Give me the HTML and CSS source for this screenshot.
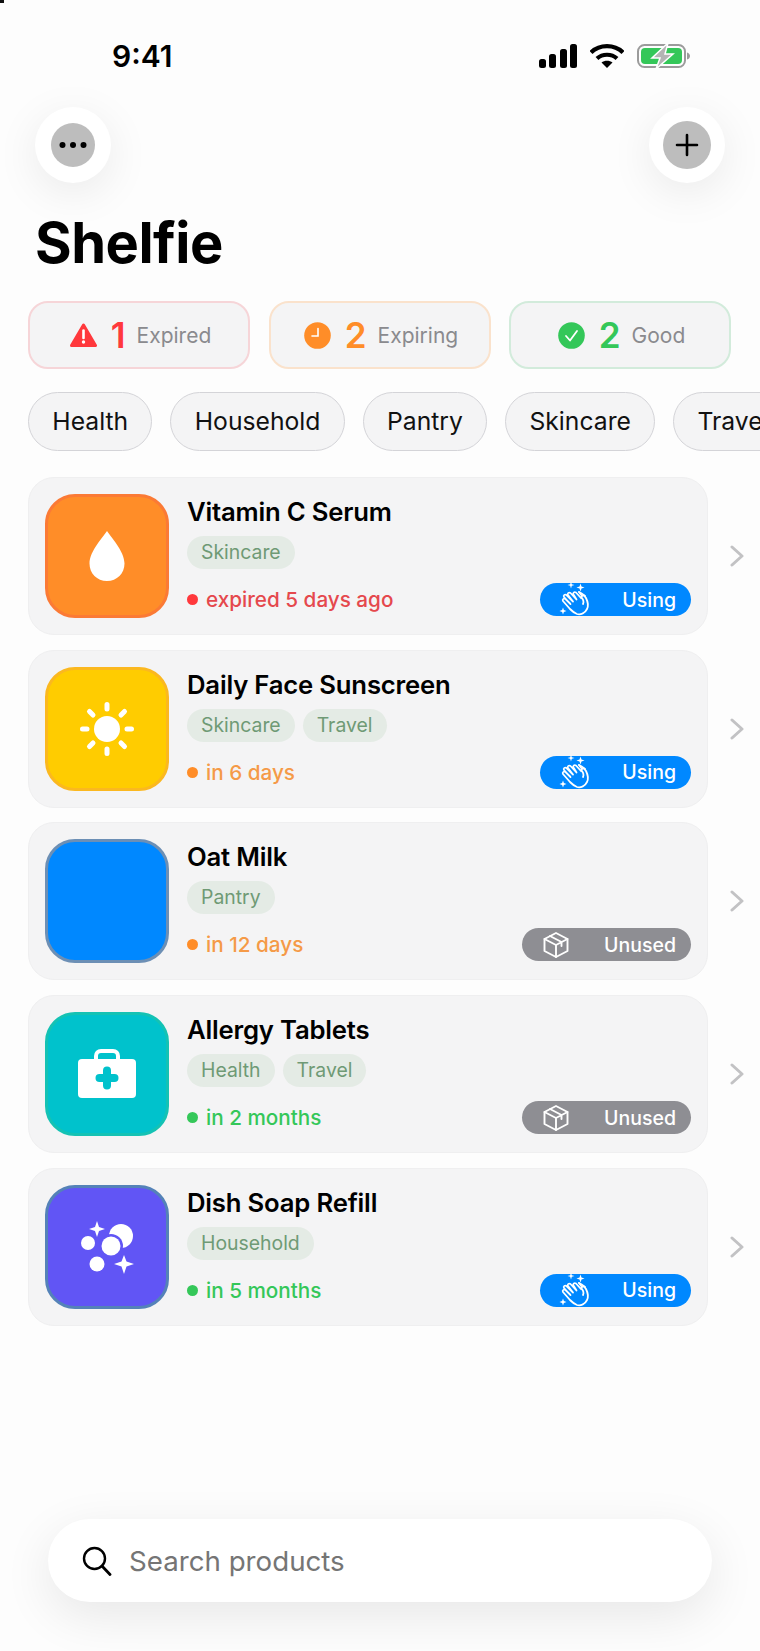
FILE: index.html
```html
<!DOCTYPE html>
<html lang="en">
<head>
  <meta charset="UTF-8" />
  <meta name="viewport" content="width=device-width, initial-scale=1.0"/>
  <title>Shelfie</title>
  <link rel="stylesheet" href="styles.css">
</head>
<body>
  <svg class="defs" width="0" height="0">
    <symbol id="clap" viewBox="0 0 36 36">
      <g fill="none" stroke="#fff" stroke-width="1.800" stroke-linecap="round" stroke-linejoin="round">
        <path d="M21 12c3 1 5 3 7 6 2 4 3 7 1 11-2 4-6 6-10 5-3-1-5-3-7-5l-7-8c-1-2 1-3 2.500-2l5 5-6.500-7c-1-2 1-3 2.500-2l6.500 6.500-5-6.500c-1-2 1-3 2.500-2l6 6.500-3-5c-1-2 1-3 2.500-2l5 5.500"/>
        <path d="M21 12l3 4c1-1 2-1 3 0M25 24c1-2 0-5-2-7"/>
      </g>
      <path d="M13 1.500l.8 2.700 2.700.8-2.700.8-.8 2.700-.8-2.700-2.700-.8 2.700-.8zM22.500 3.500l1 3 3 1-3 1-1 3-1-3-3-1 3-1zM5 27.500l.9 2.600 2.600.9-2.600.9L5 34.500l-.9-2.600L1.500 31l2.600-.9z" fill="#fff"/>
    </symbol>
    <symbol id="box" viewBox="0 0 28 28">
      <g fill="none" stroke="#fff" stroke-width="1.900" stroke-linejoin="round" stroke-linecap="round">
        <path d="M14 2l11.500 6v12L14 26 2.500 20V8z"/>
        <path d="M2.500 8L14 14l11.500-6M14 14v12M8 5l11.500 6v4"/>
      </g>
    </symbol>
  </svg>

  <div class="corner-mark"></div>

  <div class="status-bar">
    <span class="time">9:41</span>
    <div class="status-icons">
      <svg width="38" height="24" viewBox="0 0 38 24"><g fill="#000"><rect x="0" y="15" width="7" height="9" rx="2.500"/><rect x="10" y="10" width="7" height="14" rx="2.500"/><rect x="21" y="5" width="7" height="19" rx="2.500"/><rect x="31" y="0" width="7" height="24" rx="2.500"/></g></svg>
      <svg width="34" height="24" viewBox="0 0 34 24"><path d="M1 8.500C9.500 0 24.500 0 33 8.500" fill="none" stroke="#000" stroke-width="4.200"/><path d="M7 14.500c5.500-5 14.500-5 20 0" fill="none" stroke="#000" stroke-width="4.200"/><path d="M11.500 18.500c3-2.500 8-2.500 11 0L17 24z" fill="#000"/></svg>
      <svg width="54" height="26" viewBox="0 0 54 26">
        <rect x="1" y="2" width="47" height="22" rx="6.500" fill="none" stroke="#9b9b9b" stroke-width="2"/>
        <rect x="4" y="5" width="41" height="16" rx="4" fill="#34c759"/>
        <path d="M50 9.500c2 .5 3 2 3 3.500s-1 3-3 3.500z" fill="#9b9b9b"/>
        <path d="M31 0L15 15h8l-4 11 17-15h-8z" fill="#b4b4b4" stroke="#fff" stroke-width="1.500"/>
      </svg>
    </div>
  </div>

  <div class="top-actions">
    <button class="round-btn">
      <span class="round-inner small">
        <svg width="28" height="8" viewBox="0 0 28 8"><g fill="#000"><circle cx="3.500" cy="4" r="3"/><circle cx="14" cy="4" r="3"/><circle cx="24.500" cy="4" r="3"/></g></svg>
      </span>
    </button>
    <button class="round-btn">
      <span class="round-inner">
        <svg width="24" height="24" viewBox="0 0 24 24"><path d="M12 2v20M2 12h20" stroke="#000" stroke-width="2.600" stroke-linecap="round"/></svg>
      </span>
    </button>
  </div>

  <h1 class="title">Shelfie</h1>

  <div class="stats">
    <div class="stat stat-red">
      <svg width="27" height="24" viewBox="0 0 27 24"><path d="M13.500 2L25.500 22.500H1.500z" fill="#ff383c" stroke="#ff383c" stroke-width="3" stroke-linejoin="round"/><path d="M13.500 7.500v7.500" stroke="#fff" stroke-width="2.600" stroke-linecap="round"/><circle cx="13.500" cy="19" r="1.700" fill="#fff"/></svg>
      <span class="stat-num">1</span>
      <span class="stat-label">Expired</span>
    </div>
    <div class="stat stat-orange">
      <svg width="27" height="27" viewBox="0 0 27 27"><circle cx="13.500" cy="13.500" r="13.300" fill="#ff8d28"/><path d="M14 6.500v7.500H8" fill="none" stroke="#fff" stroke-width="1.600" stroke-linecap="round"/></svg>
      <span class="stat-num">2</span>
      <span class="stat-label">Expiring</span>
    </div>
    <div class="stat stat-green">
      <svg width="27" height="27" viewBox="0 0 27 27"><circle cx="13.500" cy="13.500" r="13.300" fill="#34c759"/><path d="M8 14l4 4.500 7-9.500" fill="none" stroke="#fff" stroke-width="1.800" stroke-linecap="round" stroke-linejoin="round"/></svg>
      <span class="stat-num">2</span>
      <span class="stat-label">Good</span>
    </div>
  </div>

  <div class="chips">
    <span class="chip">Health</span>
    <span class="chip">Household</span>
    <span class="chip">Pantry</span>
    <span class="chip">Skincare</span>
    <span class="chip">Travel</span>
  </div>

  <div class="products">
    <div class="product-row">
      <div class="product-card">
        <div class="thumb thumb-orange">
          <svg width="80" height="80" viewBox="-40 -40 80 80"><path d="M0-25C3-20 17.500-5 17.500 7.500 17.500 17.500 10 25 0 25S-17.500 17.500-17.500 7.500C-17.500-5-3-20 0-25z" fill="#fff"/></svg>
        </div>
        <div class="product-info">
          <div class="product-name">Vitamin C Serum</div>
          <div class="tags"><span class="tag">Skincare</span></div>
          <div class="product-bottom">
            <div class="due due-red"><i class="dot"></i>expired 5 days ago</div>
            <div class="pill pill-using"><svg width="36" height="36"><use href="#clap"/></svg><span>Using</span></div>
          </div>
        </div>
      </div>
      <svg class="chevron" width="14" height="22" viewBox="0 0 14 22"><path d="M2 2l10 9-10 9" fill="none" stroke="#c2c2c4" stroke-width="3" stroke-linecap="round" stroke-linejoin="round"/></svg>
    </div>

    <div class="product-row">
      <div class="product-card">
        <div class="thumb thumb-yellow">
          <svg width="80" height="80" viewBox="-40 -40 80 80">
            <circle r="13" fill="#fff"/>
            <path d="M0-20v-4.500M0 20v4.500M-20 0h-4.500M20 0h4.500M-14-14l-3.500-3.500M14-14l3.500-3.500M-14 14l-3.500 3.500M14 14l3.500 3.500" stroke="#fff" stroke-width="5" stroke-linecap="round"/>
          </svg>
        </div>
        <div class="product-info">
          <div class="product-name">Daily Face Sunscreen</div>
          <div class="tags"><span class="tag">Skincare</span><span class="tag">Travel</span></div>
          <div class="product-bottom">
            <div class="due due-orange"><i class="dot"></i>in 6 days</div>
            <div class="pill pill-using"><svg width="36" height="36"><use href="#clap"/></svg><span>Using</span></div>
          </div>
        </div>
      </div>
      <svg class="chevron" width="14" height="22" viewBox="0 0 14 22"><path d="M2 2l10 9-10 9" fill="none" stroke="#c2c2c4" stroke-width="3" stroke-linecap="round" stroke-linejoin="round"/></svg>
    </div>

    <div class="product-row">
      <div class="product-card">
        <div class="thumb thumb-blue"></div>
        <div class="product-info">
          <div class="product-name">Oat Milk</div>
          <div class="tags"><span class="tag">Pantry</span></div>
          <div class="product-bottom">
            <div class="due due-orange"><i class="dot"></i>in 12 days</div>
            <div class="pill pill-unused"><svg width="28" height="28"><use href="#box"/></svg><span>Unused</span></div>
          </div>
        </div>
      </div>
      <svg class="chevron" width="14" height="22" viewBox="0 0 14 22"><path d="M2 2l10 9-10 9" fill="none" stroke="#c2c2c4" stroke-width="3" stroke-linecap="round" stroke-linejoin="round"/></svg>
    </div>

    <div class="product-row">
      <div class="product-card">
        <div class="thumb thumb-teal">
          <svg width="80" height="80" viewBox="-40 -40 80 80">
            <path d="M-11-14v-4c0-3 2-5 5-5H6c3 0 5 2 5 5v4" fill="none" stroke="#fff" stroke-width="4"/>
            <rect x="-29" y="-15" width="58" height="39" rx="4" fill="#fff"/>
            <path d="M0-3.500v15M-7.500 4h15" stroke="#00c2cc" stroke-width="8" stroke-linecap="round"/>
          </svg>
        </div>
        <div class="product-info">
          <div class="product-name">Allergy Tablets</div>
          <div class="tags"><span class="tag">Health</span><span class="tag">Travel</span></div>
          <div class="product-bottom">
            <div class="due due-green"><i class="dot"></i>in 2 months</div>
            <div class="pill pill-unused"><svg width="28" height="28"><use href="#box"/></svg><span>Unused</span></div>
          </div>
        </div>
      </div>
      <svg class="chevron" width="14" height="22" viewBox="0 0 14 22"><path d="M2 2l10 9-10 9" fill="none" stroke="#c2c2c4" stroke-width="3" stroke-linecap="round" stroke-linejoin="round"/></svg>
    </div>

    <div class="product-row">
      <div class="product-card">
        <div class="thumb thumb-purple">
          <svg width="80" height="80" viewBox="-40 -40 80 80">
            <circle cx="14" cy="-11" r="12" fill="#fff"/>
            <circle cx="4" cy="-1" r="12" fill="#6155f5"/>
            <circle cx="4" cy="-1" r="9.500" fill="#fff"/>
            <circle cx="-19" cy="-4" r="7" fill="#fff"/>
            <circle cx="-10" cy="17" r="7.500" fill="#fff"/>
            <path d="M-10-26l2 6 6 2-6 2-2 6-2-6-6-2 6-2z" fill="#fff"/>
            <path d="M17 8l2.500 6.500L27 17l-7.500 2.500L17 27l-2.500-7.500L7 17l7.500-2.500z" fill="#fff"/>
          </svg>
        </div>
        <div class="product-info">
          <div class="product-name">Dish Soap Refill</div>
          <div class="tags"><span class="tag">Household</span></div>
          <div class="product-bottom">
            <div class="due due-green"><i class="dot"></i>in 5 months</div>
            <div class="pill pill-using"><svg width="36" height="36"><use href="#clap"/></svg><span>Using</span></div>
          </div>
        </div>
      </div>
      <svg class="chevron" width="14" height="22" viewBox="0 0 14 22"><path d="M2 2l10 9-10 9" fill="none" stroke="#c2c2c4" stroke-width="3" stroke-linecap="round" stroke-linejoin="round"/></svg>
    </div>
  </div>

  <div class="search">
    <svg width="30" height="30" viewBox="0 0 30 30"><circle cx="12.500" cy="12.500" r="10.500" fill="none" stroke="#000" stroke-width="2.400"/><path d="M20 20l8 8.500" stroke="#000" stroke-width="2.800" stroke-linecap="round"/></svg>
    <span class="search-text">Search products</span>
  </div>
</body>
</html>
```

FILE: styles.css
```css
* {
  box-sizing: border-box;
}

html, body {
  margin: 0;
  padding: 0;
}

body {
  position: relative;
  width: 760px;
  height: 1651px;
  overflow: hidden;
  display: flex;
  flex-direction: column;
  background: #fdfdfd;
  color: #000;
  font-family: Inter, "Liberation Sans", sans-serif;
}

.defs {
  position: absolute;
}

.corner-mark {
  position: absolute;
  left: 0;
  top: 0;
  width: 4px;
  height: 3px;
  background: #111;
}

.status-bar {
  display: flex;
  justify-content: space-between;
  align-items: center;
  height: 26px;
  margin-top: 43px;
  padding: 0 69px 0 112px;
}

.time {
  font-size: 30px;
  font-weight: 600;
  line-height: 26px;
}

.status-icons {
  display: flex;
  align-items: center;
  gap: 13px;
}

.top-actions {
  display: flex;
  justify-content: space-between;
  margin-top: 38px;
  padding: 0 35px;
}

.round-btn {
  width: 76px;
  height: 76px;
  padding: 0;
  border: none;
  border-radius: 50%;
  background: #fff;
  display: flex;
  align-items: center;
  justify-content: center;
  box-shadow: 0 10px 44px rgba(0, 0, 0, 0.08);
}

.round-inner {
  width: 48px;
  height: 48px;
  border-radius: 50%;
  background: #bdbdbd;
  display: flex;
  align-items: center;
  justify-content: center;
}

.round-inner.small {
  width: 44px;
  height: 44px;
}

.title {
  margin: 27px 0 0 35px;
  font-size: 56px;
  font-weight: 700;
  line-height: 66px;
  letter-spacing: -0.5px;
}

.stats {
  display: flex;
  gap: 18.500px;
  margin-top: 25px;
  padding-left: 28px;
}

.stat {
  width: 222px;
  height: 68px;
  padding-left: 3px;
  border-radius: 20px;
  background: #f4f4f5;
  border: 2px solid #ddd;
  display: flex;
  align-items: center;
  justify-content: center;
  gap: 14px;
}

.stat-red { border-color: #f6d5d8; color: #ff383c; }
.stat-orange { border-color: #fae2cc; color: #ff8d28; }
.stat-green { border-color: #d2ebdb; color: #34c759; }

.stat-num {
  font-size: 35px;
  font-weight: 600;
  line-height: 40px;
}

.stat-label {
  margin-left: -3px;
  font-size: 21px;
  color: #8a8a8e;
}

.chips {
  display: flex;
  gap: 18px;
  margin-top: 23px;
  padding-left: 28px;
}

.chip {
  flex: none;
  height: 59px;
  padding: 0 23.300px;
  border-radius: 30px;
  border: 1.5px solid #d4d4d8;
  background: #f4f4f5;
  font-size: 24.700px;
  line-height: 56px;
  color: #111;
}

.products {
  display: flex;
  flex-direction: column;
  gap: 14.700px;
  margin-top: 26px;
  padding-left: 28px;
}

.product-row {
  display: flex;
  align-items: center;
  gap: 22px;
}

.product-card {
  width: 680px;
  height: 158px;
  padding: 16px;
  display: flex;
  gap: 18px;
  border-radius: 26px;
  background: #f4f4f5;
  border: 1px solid #efeff0;
}

.thumb {
  flex: none;
  width: 124px;
  height: 124px;
  border-radius: 30px;
  border: 3px solid transparent;
  display: flex;
  align-items: center;
  justify-content: center;
}

.thumb-orange { background: #ff8d28; border-color: #fb7a35; }
.thumb-yellow { background: #ffcc00; border-color: #fbb81f; }
.thumb-blue { background: #0088ff; border-color: #6c8fb5; }
.thumb-teal { background: #00c2cc; border-color: #14c2b4; }
.thumb-purple { background: #6155f5; border-color: #5482b8; }

.product-info {
  flex: 1;
  display: flex;
  flex-direction: column;
}

.product-name {
  margin-top: 2px;
  font-size: 25.700px;
  font-weight: 600;
  line-height: 32px;
  letter-spacing: -0.2px;
}

.tags {
  display: flex;
  gap: 8px;
  margin-top: 8px;
}

.tag {
  height: 33px;
  padding: 0 14px;
  border-radius: 17px;
  background: #e4ebe5;
  color: #6f9a75;
  font-size: 19.400px;
  line-height: 33px;
}

.product-bottom {
  display: flex;
  justify-content: space-between;
  align-items: center;
  margin-top: 14px;
}

.due {
  display: flex;
  align-items: center;
  gap: 8px;
  font-size: 20.700px;
  font-weight: 500;
}

.dot {
  width: 11px;
  height: 11px;
  border-radius: 50%;
}

.due-red { color: #e5484d; }
.due-red .dot { background: #ff383c; }
.due-orange { color: #f59a47; }
.due-orange .dot { background: #ff8d28; }
.due-green { color: #34c759; }
.due-green .dot { background: #34c759; }

.pill {
  height: 33px;
  border-radius: 17px;
  display: flex;
  align-items: center;
  justify-content: space-between;
  padding: 0 15px 0 18px;
  color: #fff;
  font-size: 19.500px;
  font-weight: 500;
}

.pill svg {
  flex: none;
}

.pill-using {
  width: 151px;
  background: #0088ff;
}

.pill-using svg {
  margin-top: -3px;
}

.pill-unused {
  width: 169px;
  padding-left: 20px;
  background: #8e8e93;
}

.search {
  position: absolute;
  left: 48px;
  top: 1519px;
  width: 664px;
  height: 83px;
  padding-left: 34px;
  display: flex;
  align-items: center;
  gap: 17px;
  border-radius: 42px;
  background: #fff;
  box-shadow: 0 14px 50px rgba(0, 0, 0, 0.09);
}

.search-text {
  font-size: 27.700px;
  color: #757575;
}
```
